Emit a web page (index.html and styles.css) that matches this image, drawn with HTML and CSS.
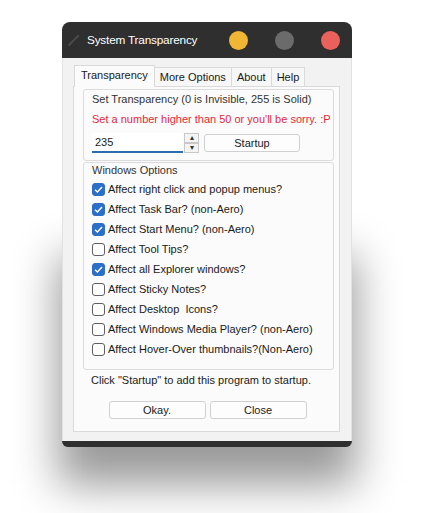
FILE: index.html
```html
<!DOCTYPE html>
<html lang="en">
  <head>
    <meta charset="UTF-8" />
    <title>System Transparency</title>
    <link rel="stylesheet" href="styles.css">
  </head>
  <body>
    <div class="window">
      <div class="titlebar">
        <svg class="app-icon" width="12" height="12" viewBox="0 0 12 12">
          <path d="M1 11 L10 2" stroke="#4a4a4a" stroke-width="2" stroke-linecap="round" />
        </svg>
        <span class="title">System Transparency</span>
        <div class="dots">
          <span class="dot yellow"></span>
          <span class="dot gray"></span>
          <span class="dot red"></span>
        </div>
      </div>
      <div class="client">
        <div class="tabs">
          <div class="tab active">Transparency</div>
          <div class="tab">More Options</div>
          <div class="tab">About</div>
          <div class="tab">Help</div>
        </div>
        <div class="panel">
          <div class="group group-top">
            <div class="legend">Set Transparency (0 is Invisible, 255 is Solid)</div>
            <div class="warning">Set a number higher than 50 or you'll be sorry. :P</div>
            <div class="input-row">
              <div class="number-input">235</div>
              <div class="spinner">
                <span class="spin">&#9652;</span>
                <span class="spin">&#9662;</span>
              </div>
              <div class="button startup">Startup</div>
            </div>
          </div>
          <div class="group group-options">
            <div class="legend">Windows Options</div>
            <div class="option"><span class="check on"></span>Affect right click and popup menus?</div>
            <div class="option"><span class="check on"></span>Affect Task Bar? (non-Aero)</div>
            <div class="option"><span class="check on"></span>Affect Start Menu? (non-Aero)</div>
            <div class="option"><span class="check"></span>Affect Tool Tips?</div>
            <div class="option"><span class="check on"></span>Affect all Explorer windows?</div>
            <div class="option"><span class="check"></span>Affect Sticky Notes?</div>
            <div class="option"><span class="check"></span>Affect Desktop&nbsp; Icons?</div>
            <div class="option"><span class="check"></span>Affect Windows Media Player? (non-Aero)</div>
            <div class="option"><span class="check"></span>Affect Hover-Over thumbnails?(Non-Aero)</div>
          </div>
          <div class="hint">Click "Startup" to add this program to startup.</div>
          <div class="footer">
            <div class="button">Okay.</div>
            <div class="button">Close</div>
          </div>
        </div>
      </div>
      <div class="bottombar"></div>
    </div>
  </body>
</html>
```

FILE: styles.css
```css
* {
  padding: 0;
  margin: 0;
  box-sizing: border-box;
}
html,
body {
  height: 100%;
}
body {
  background: #ffffff;
  font-family: "Liberation Sans", Arial, sans-serif;
  font-size: 11px;
  color: #1a1a1a;
  white-space: nowrap;
  overflow: hidden;
  padding-top: 22px;
}
.window {
  position: relative;
  width: 290px;
  margin-left: 62px;
  border-radius: 8px 8px 6px 6px;
}
/* soft drop shadow under the window */
.window::after {
  content: "";
  position: absolute;
  left: -4px;
  right: -4px;
  top: 55%;
  bottom: -38px;
  background: rgba(0, 0, 0, 0.4);
  filter: blur(22px);
  z-index: -1;
}
.titlebar {
  height: 36px;
  background: #2f2f2f;
  border-radius: 8px 8px 0 0;
  display: flex;
  align-items: center;
  padding: 0 12px 0 6px;
  color: #ffffff;
}
.app-icon {
  margin-right: 7px;
}
.title {
  flex: 1;
  font-size: 11.8px;
  letter-spacing: -0.2px;
}
.dots {
  display: flex;
  gap: 27px;
}
.dot {
  width: 19px;
  height: 19px;
  border-radius: 50%;
}
.yellow {
  background: #f1b634;
}
.gray {
  background: #6b6b6b;
}
.red {
  background: #ea615c;
}
.client {
  background: #f2f2f2;
  padding: 7px 11px 9px 10px;
  border-left: 1px solid #e2e2e2;
  border-right: 1px solid #e2e2e2;
}
.tabs {
  display: flex;
  height: 21px;
  padding-left: 1px;
  align-items: flex-end;
}
.tab {
  height: 19px;
  padding: 0 5px;
  line-height: 18px;
  background: #f7f7f7;
  border: 1px solid #dadada;
  border-bottom: none;
  margin-right: -1px;
}
.tab.active {
  height: 22px;
  background: #fbfbfb;
  padding: 0 6px;
  position: relative;
  z-index: 1;
  margin-bottom: -1px;
}
.panel {
  background: #fbfbfb;
  border: 1px solid #dadada;
  height: 346px;
  padding: 2px 5px 0 9px;
}
.group {
  border: 1px solid #dcdcdc;
  border-radius: 3px;
  padding: 3px 8px 0 8px;
}
.group-top {
  height: 72px;
}
.legend {
  height: 17px;
  color: #333333;
}
.warning {
  color: #e8273a;
  margin-top: 3px;
  height: 17px;
}
.input-row {
  display: flex;
  align-items: center;
  margin-top: 3px;
}
.number-input {
  width: 91px;
  height: 20px;
  background: #ffffff;
  border-bottom: 2px solid #2c6cb0;
  padding-left: 3px;
  line-height: 18px;
}
.spinner {
  display: flex;
  flex-direction: column;
  width: 15px;
  height: 20px;
  margin-left: 1px;
}
.spin {
  flex: 1;
  border: 1px solid #c8c8c8;
  background: #f4f4f4;
  font-size: 8px;
  line-height: 8px;
  text-align: center;
  color: #333333;
}
.button {
  background: #fdfdfd;
  border: 1px solid #d0d0d0;
  border-radius: 3px;
  text-align: center;
  height: 18px;
  line-height: 16px;
}
.startup {
  width: 96px;
  margin-left: 5px;
}
.group-options {
  margin-top: 1px;
  height: 208px;
  padding-top: 1px;
}
.group-options .legend {
  height: 15px;
}
.option {
  display: flex;
  align-items: center;
  height: 20px;
}
.check {
  width: 13px;
  height: 13px;
  border: 1px solid #5f5f5f;
  border-radius: 3px;
  margin-right: 3px;
  background: #ffffff;
  flex-shrink: 0;
}
.check.on {
  background: #2c6fc9
    url("data:image/svg+xml;utf8,<svg xmlns='http://www.w3.org/2000/svg' viewBox='0 0 13 13'><path d='M3 6.8 L5.4 9 L10 4' fill='none' stroke='white' stroke-width='1.5'/></svg>")
    center / 13px 13px no-repeat;
  border-color: #2c6fc9;
}
.hint {
  padding-left: 8px;
  height: 20px;
  line-height: 20px;
}
.footer {
  display: flex;
  justify-content: center;
  gap: 4px;
  margin-top: 11px;
  padding-right: 2px;
}
.footer .button {
  width: 97px;
}
.bottombar {
  height: 6px;
  background: #2f2f2f;
  border-radius: 0 0 6px 6px;
}
```
